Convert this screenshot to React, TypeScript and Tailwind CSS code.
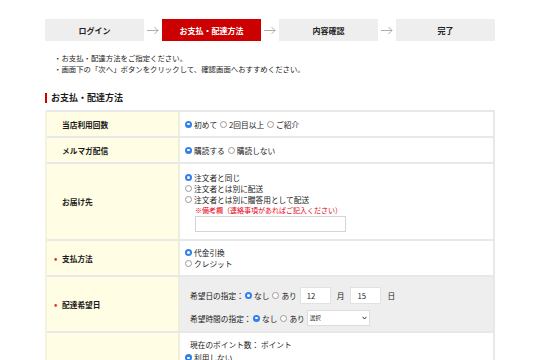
import React from "react";

const STEPS = ["ログイン", "お支払・配達方法", "内容確認", "完了"];

function Radio({ checked }: { checked?: boolean }) {
  return checked ? (
    <span className="inline-flex w-[7px] h-[7px] rounded-full bg-[#2f80ed] items-center justify-center shrink-0">
      <span className="w-[2.5px] h-[2.5px] rounded-full bg-white" />
    </span>
  ) : (
    <span className="inline-block w-[7px] h-[7px] rounded-full border border-[#9a9a9a] bg-white shrink-0" />
  );
}

function Opt({ checked, label }: { checked?: boolean; label: string }) {
  return (
    <span className="inline-flex items-center gap-[2px]">
      <Radio checked={checked} />
      <span>{label}</span>
    </span>
  );
}

function Row({
  label,
  required,
  gray,
  className,
  children,
}: {
  label: string;
  required?: boolean;
  gray?: boolean;
  className?: string;
  children: React.ReactNode;
}) {
  return (
    <div className="grid grid-cols-[133px_1fr] border-t-2 border-[#e8e8e8]">
      <div className="bg-[#fffde3] flex items-center pl-[7px] font-bold border-r-2 border-[#eeeedd]">
        <span className={`w-[7px] text-[#e0382a] text-[9px] leading-none ${required ? "" : "invisible"}`}>•</span>
        <span className="ml-[1px]">{label}</span>
      </div>
      <div className={`${gray ? "bg-[#eeeeee]" : "bg-white"} ${className ?? ""}`}>{children}</div>
    </div>
  );
}

export default function App() {
  return (
    <div
      className="w-[540px] h-[360px] overflow-hidden bg-white text-[#1a1a1a] text-[7.7px] leading-[11px]"
      style={{ fontFamily: '"Noto Sans CJK JP", "Noto Sans", sans-serif' }}
    >
      <div className="w-[450px] mx-auto pt-[19px]">
        {/* steps */}
        <div className="flex items-center justify-between">
          {STEPS.map((s, i) => (
            <React.Fragment key={s}>
              <div
                className={`w-[99px] h-[22px] flex items-center justify-center font-bold text-[8px] ${
                  i === 1 ? "bg-[#cc0000] text-white" : "bg-[#eeeeee] text-[#222]"
                }`}
              >
                {s}
              </div>
              {i < STEPS.length - 1 && (
                <svg width="12" height="8" viewBox="0 0 12 8" className="text-[#999]">
                  <path d="M0 4.5H11M7.5 1L11 4.5L7.5 8" fill="none" stroke="currentColor" strokeWidth="0.8" />
                </svg>
              )}
            </React.Fragment>
          ))}
        </div>

        {/* notes */}
        <div className="mt-[11px] pl-[9px] text-[7.4px] leading-[11px]">
          <p>・お支払・配達方法をご指定ください。</p>
          <p>・画面下の「次へ」ボタンをクリックして、確認画面へおすすめください。</p>
        </div>

        {/* heading */}
        <div className="mt-[18px] flex items-center gap-[4px]">
          <span className="w-[2px] h-[10px] bg-[#cc0000]" />
          <h2 className="font-bold text-[9px] leading-[12px]">お支払・配達方法</h2>
        </div>

        {/* table */}
        <div className="mt-[6px] border-x-2 border-[#e8e8e8] border-l-[#f3f3e0]">
          <Row label="当店利用回数" className="h-[24px] flex items-center px-[5px]">
            <div className="flex items-center gap-[3px]">
              <Opt checked label="初めて" />
              <Opt label="2回目以上" />
              <Opt label="ご紹介" />
            </div>
          </Row>
          <Row label="メルマガ配信" className="h-[24px] flex items-center px-[5px]">
            <div className="flex items-center gap-[3px]">
              <Opt checked label="購読する" />
              <Opt label="購読しない" />
            </div>
          </Row>
          <Row label="お届け先" className="h-[75px] px-[5px] pt-[8px]">
            <div className="flex flex-col">
              <Opt checked label="注文者と同じ" />
              <Opt label="注文者とは別に配送" />
              <Opt label="注文者とは別に贈答用として配送" />
            </div>
            <div className="pl-[10px]">
              <p className="text-[#e60012] text-[7px] leading-[10px]">※備考欄（連絡事項があればご記入ください）</p>
              <div className="w-[151px] h-[16px] border border-[#d4d4d4] bg-white mt-[1px]" />
            </div>
          </Row>
          <Row label="支払方法" required className="h-[34px] px-[5px] flex flex-col justify-center">
            <Opt checked label="代金引換" />
            <Opt label="クレジット" />
          </Row>
          <Row label="配達希望日" required gray className="h-[54px] pl-[10px] pt-[10px] flex flex-col gap-[6px]">
            <div className="flex items-center h-[17px]">
              <span className="w-[55px]">希望日の指定：</span>
              <span className="flex items-center gap-[3px]">
                <Opt checked label="なし" />
                <Opt label="あり" />
              </span>
              <span className="ml-[3px] w-[31px] h-[17px] bg-white border border-[#e2e2e2] flex items-center pl-[6px]">12</span>
              <span className="ml-[6px]">月</span>
              <span className="ml-[6px] w-[31px] h-[17px] bg-white border border-[#e2e2e2] flex items-center pl-[6px]">15</span>
              <span className="ml-[6px]">日</span>
            </div>
            <div className="flex items-center h-[16px]">
              <span className="w-[63px]">希望時間の指定：</span>
              <span className="flex items-center gap-[3px]">
                <Opt checked label="なし" />
                <Opt label="あり" />
              </span>
              <span className="ml-[2px] w-[63px] h-[16px] bg-white border border-[#dcdcdc] flex items-center justify-between px-[2px] text-[5.5px]">
                選択
                <svg width="5" height="4" viewBox="0 0 5 4">
                  <path d="M0.6 0.8L2.5 3L4.4 0.8" fill="none" stroke="#333" strokeWidth="1" />
                </svg>
              </span>
            </div>
          </Row>
          <Row label="ポイント利用" className="h-[60px] pl-[10px] pt-[6px]">
            <p>現在のポイント数： ポイント</p>
            <div className="-ml-[5px]">
              <Opt checked label="利用しない" />
            </div>
          </Row>
        </div>
      </div>
    </div>
  );
}
